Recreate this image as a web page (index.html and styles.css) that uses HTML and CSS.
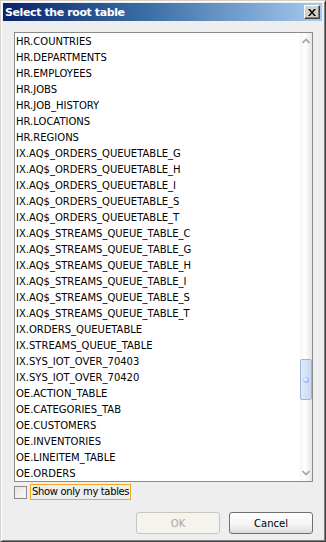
FILE: index.html
```html
<!DOCTYPE html>
<html lang="en">
<head>
    <meta charset="UTF-8">
    <title>Select the root table</title>
    <link rel="stylesheet" href="styles.css">
</head>
<body>
    <div class="dialog">
        <div class="title-bar">
            <span class="title-text">Select the root table</span>
            <button class="title-close" aria-label="Close">
                <svg width="8" height="7" viewBox="0 0 8 7">
                    <path d="M0 0h2l2 2.5L6 0h2L5 3.5 8 7H6L4 4.5 2 7H0l3-3.5z" fill="#000"/>
                </svg>
            </button>
        </div>

        <div class="dialog-body">
            <!-- table list -->
            <div class="table-list">
                <ul class="table-items">
                    <li>HR.COUNTRIES</li>
                    <li>HR.DEPARTMENTS</li>
                    <li>HR.EMPLOYEES</li>
                    <li>HR.JOBS</li>
                    <li>HR.JOB_HISTORY</li>
                    <li>HR.LOCATIONS</li>
                    <li>HR.REGIONS</li>
                    <li>IX.AQ$_ORDERS_QUEUETABLE_G</li>
                    <li>IX.AQ$_ORDERS_QUEUETABLE_H</li>
                    <li>IX.AQ$_ORDERS_QUEUETABLE_I</li>
                    <li>IX.AQ$_ORDERS_QUEUETABLE_S</li>
                    <li>IX.AQ$_ORDERS_QUEUETABLE_T</li>
                    <li>IX.AQ$_STREAMS_QUEUE_TABLE_C</li>
                    <li>IX.AQ$_STREAMS_QUEUE_TABLE_G</li>
                    <li>IX.AQ$_STREAMS_QUEUE_TABLE_H</li>
                    <li>IX.AQ$_STREAMS_QUEUE_TABLE_I</li>
                    <li>IX.AQ$_STREAMS_QUEUE_TABLE_S</li>
                    <li>IX.AQ$_STREAMS_QUEUE_TABLE_T</li>
                    <li>IX.ORDERS_QUEUETABLE</li>
                    <li>IX.STREAMS_QUEUE_TABLE</li>
                    <li>IX.SYS_IOT_OVER_70403</li>
                    <li>IX.SYS_IOT_OVER_70420</li>
                    <li>OE.ACTION_TABLE</li>
                    <li>OE.CATEGORIES_TAB</li>
                    <li>OE.CUSTOMERS</li>
                    <li>OE.INVENTORIES</li>
                    <li>OE.LINEITEM_TABLE</li>
                    <li>OE.ORDERS</li>
                </ul>
                <div class="scrollbar">
                    <div class="scroll-arrow">
                        <svg width="8" height="6" viewBox="0 0 8 6">
                            <path d="M0.5 5L4 1.5 7.5 5" fill="none" stroke="#a0a4ac" stroke-width="1.6"/>
                        </svg>
                    </div>
                    <div class="scroll-track">
                        <div class="scroll-thumb"><span class="thumb-grip"></span></div>
                    </div>
                    <div class="scroll-arrow">
                        <svg width="8" height="6" viewBox="0 0 8 6">
                            <path d="M0.5 1L4 4.5 7.5 1" fill="none" stroke="#a0a4ac" stroke-width="1.6"/>
                        </svg>
                    </div>
                </div>
            </div>

            <label class="check-row">
                <span class="check-box"></span>
                <span class="check-label">Show only my tables</span>
            </label>

            <div class="dialog-buttons">
                <button class="btn" disabled>OK</button>
                <button class="btn">Cancel</button>
            </div>
        </div>
    </div>
</body>
</html>
```

FILE: styles.css
```css
html, body {
    margin: 0;
    padding: 0;
}

body {
    width: 326px;
    height: 542px;
    font-family: "DejaVu Sans", "Liberation Sans", sans-serif;
    font-size: 10px;
    color: #000;
}

.dialog {
    box-sizing: border-box;
    width: 326px;
    height: 542px;
    display: flex;
    flex-direction: column;
    background: #eeeeee;
    border: 1px solid;
    border-color: #d4d0c8 #404040 #404040 #d4d0c8;
    box-shadow: inset 1px 1px 0 #ffffff, inset -1px -1px 0 #808080;
    padding: 2px 3px 3px 2px;
}

.title-bar {
    height: 18px;
    display: flex;
    align-items: center;
    justify-content: space-between;
    padding: 0 2px 0 2px;
    background: linear-gradient(to right, #0a246a 0%, #3a6ea5 45%, #a6caf0 100%);
}

.title-text {
    color: #fff;
    font-weight: bold;
    font-size: 11px;
    letter-spacing: -0.4px;
}

.title-close {
    box-sizing: border-box;
    width: 16px;
    height: 14px;
    padding: 0;
    display: flex;
    align-items: center;
    justify-content: center;
    background: #d4d0c8;
    border: 1px solid;
    border-color: #ffffff #404040 #404040 #ffffff;
    box-shadow: inset -1px -1px 0 #808080;
}

.dialog-body {
    flex: 1;
    display: flex;
    flex-direction: column;
    padding: 11px 9px 0 11px;
}

.table-list {
    box-sizing: border-box;
    height: 450px;
    display: flex;
    border: 1px solid #8a8a8a;
    background: #fff;
}

.table-items {
    flex: 1;
    margin: 0;
    padding: 1px 0 0 0;
    list-style: none;
    overflow: hidden;
}

.table-items li {
    height: 16px;
    line-height: 16px;
    padding-left: 1px;
    white-space: nowrap;
    color: #000;
}

.scrollbar {
    width: 12px;
    display: flex;
    flex-direction: column;
    background: linear-gradient(to right, #f4f4f4 0%, #ffffff 40%, #e6e6e6 100%);
}

.scroll-arrow {
    height: 16px;
    display: flex;
    align-items: center;
    justify-content: center;
}

.scroll-track {
    flex: 1;
}

.scroll-thumb {
    box-sizing: border-box;
    height: 41px;
    margin-top: 310px;
    display: flex;
    align-items: center;
    justify-content: center;
    border: 1px solid #9cb4dc;
    border-radius: 2px;
    background: linear-gradient(to right, #e2ebf8 0%, #c8d8f0 100%);
}

.thumb-grip {
    width: 6px;
    height: 6px;
    border-radius: 50%;
    background: radial-gradient(circle at 40% 40%, #ffffff 0%, #9cbcf0 60%, #7aa0e0 100%);
}

.check-row {
    display: flex;
    align-items: center;
    gap: 3px;
    margin-top: 2px;
    height: 16px;
}

.check-box {
    box-sizing: border-box;
    width: 13px;
    height: 13px;
    border: 1px solid #8a8a8a;
    background: linear-gradient(135deg, #e6e6e6 0%, #f8f8f8 100%);
}

.check-label {
    box-sizing: border-box;
    height: 16px;
    line-height: 14px;
    padding: 0 1px;
    border: 1px solid #f5a623;
    letter-spacing: -0.35px;
}

.dialog-buttons {
    display: flex;
    justify-content: flex-end;
    gap: 9px;
    margin-top: 12px;
}

.btn {
    box-sizing: border-box;
    width: 84px;
    height: 22px;
    padding: 0;
    font-family: "DejaVu Sans", "Liberation Sans", sans-serif;
    font-size: 10px;
    color: #000;
    border: 1px solid #6f6f6f;
    border-radius: 3px;
    background: linear-gradient(to bottom, #ffffff 0%, #f4f4f4 60%, #dcdcdc 100%);
}

.btn:disabled {
    color: #aca899;
    border-color: #c9c7ba;
    background: #f4f3ee;
}
```
